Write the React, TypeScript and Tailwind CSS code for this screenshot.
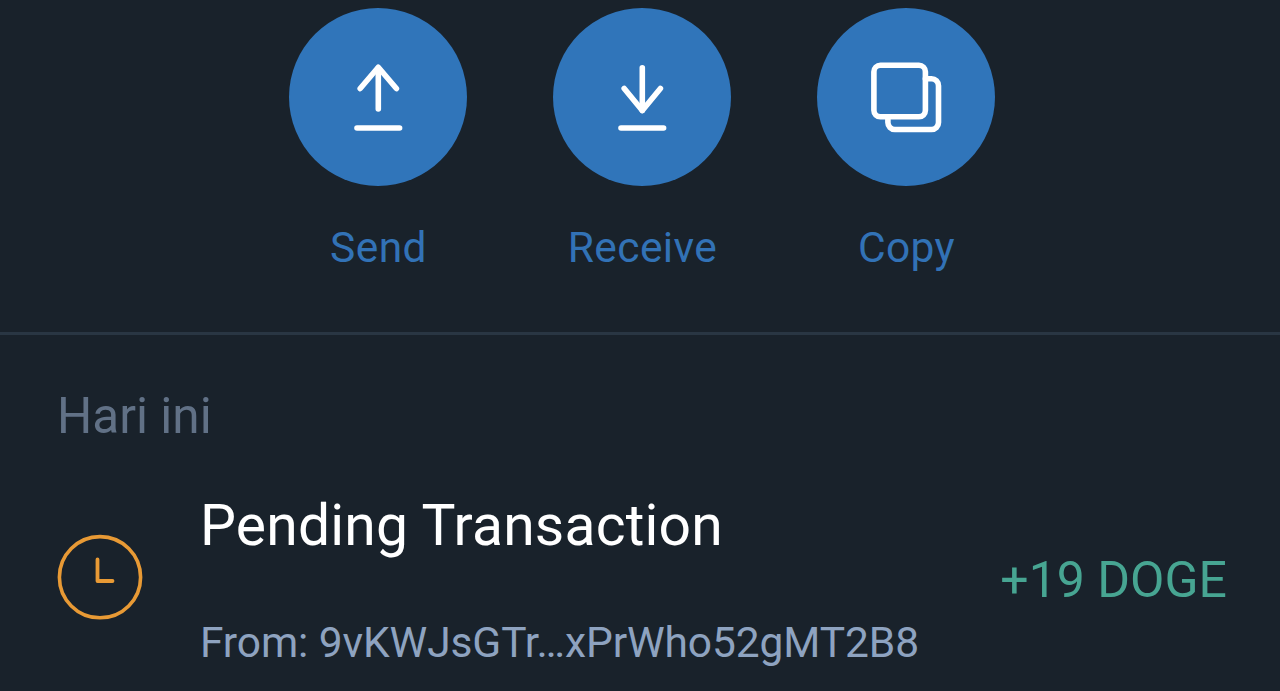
import React from 'react';

interface Action {
  id: string;
  label: string;
  icon: React.ReactNode;
}

interface Transaction {
  id: string;
  title: string;
  from: string;
  amount: string;
}

const iconProps = {
  viewBox: '0 0 80 80',
  fill: 'none',
  stroke: 'currentColor',
  strokeWidth: 5.6,
  strokeLinecap: 'round' as const,
  strokeLinejoin: 'round' as const,
  className: 'size-20',
};

const SendIcon = () => (
  <svg {...iconProps}>
    <path d="M40.3 52V11" />
    <path d="M22.2 31.5L40.3 10.3L58.4 31.5" />
    <path d="M19 71H61.6" />
  </svg>
);

const ReceiveIcon = () => (
  <svg {...iconProps}>
    <path d="M40.3 10.7V53.5" />
    <path d="M22.2 31.5L40.3 53.5L58.4 31.5" />
    <path d="M19 71H61.6" />
  </svg>
);

const CopyIcon = () => (
  <svg {...iconProps}>
    <rect x="7.9" y="8.3" width="51.5" height="51.5" rx="6.5" />
    <path d="M59.4 21.7H65.5A7 7 0 0 1 72.5 28.7V65.5A7 7 0 0 1 65.5 72.5H28.9A7 7 0 0 1 21.9 65.5V59.8" />
  </svg>
);

const ClockIcon = () => (
  <svg viewBox="0 0 86 86" fill="none" stroke="currentColor" className="size-[86px] text-[#e89a35]">
    <circle cx="43" cy="43.2" r="40.6" strokeWidth="3.6" />
    <path d="M40.5 25.5V47H55.5" strokeWidth="3.8" strokeLinecap="round" strokeLinejoin="round" />
  </svg>
);

const actions: Action[] = [
  { id: 'send', label: 'Send', icon: <SendIcon /> },
  { id: 'receive', label: 'Receive', icon: <ReceiveIcon /> },
  { id: 'copy', label: 'Copy', icon: <CopyIcon /> },
];

const transactions: Transaction[] = [
  { id: 'tx1', title: 'Pending Transaction', from: '9vKWJsGTr…xPrWho52gMT2B8', amount: '+19 DOGE' },
];

const ActionButton: React.FC<{ action: Action }> = ({ action }) => (
  <button type="button" className="flex w-[178px] flex-col items-center">
    <span className="flex size-[178px] items-center justify-center rounded-full bg-[#3075ba] text-white">
      {action.icon}
    </span>
    <span className="mt-[37.5px] pl-px text-[42.5px] leading-[48px] tracking-[0.4px] text-[#3272b6]">{action.label}</span>
  </button>
);

const TransactionRow: React.FC<{ transaction: Transaction }> = ({ transaction }) => (
  <div className="flex items-center">
    <div className="mb-1.5 w-[143px] shrink-0">
      <ClockIcon />
    </div>
    <div className="flex-1 whitespace-nowrap">
      <p className="text-[57px] leading-[68px] tracking-[0.2px] text-white">{transaction.title}</p>
      <p className="mt-[58px] text-[42.5px] leading-[50px] tracking-[-0.1px] text-[#8ea3c0]">From: {transaction.from}</p>
    </div>
    <p className="whitespace-nowrap text-[50px] leading-[60px] text-[#47a592]">{transaction.amount}</p>
  </div>
);

export default function App() {
  return (
    <div className="h-[691px] w-full overflow-hidden bg-[#19222b] font-[Roboto,sans-serif]">
      <div className="flex h-[335px] items-start justify-center gap-[86px] border-b-3 border-[#293643] pt-[8.4px] pl-1">
        {actions.map((action) => (
          <ActionButton key={action.id} action={action} />
        ))}
      </div>

      <div className="pt-[51px] pr-[53px] pl-[57px]">
        <h2 className="mb-[46px] text-[49.5px] leading-[60px] text-[#617186]">Hari ini</h2>
        {transactions.map((transaction) => (
          <TransactionRow key={transaction.id} transaction={transaction} />
        ))}
      </div>
    </div>
  );
}
